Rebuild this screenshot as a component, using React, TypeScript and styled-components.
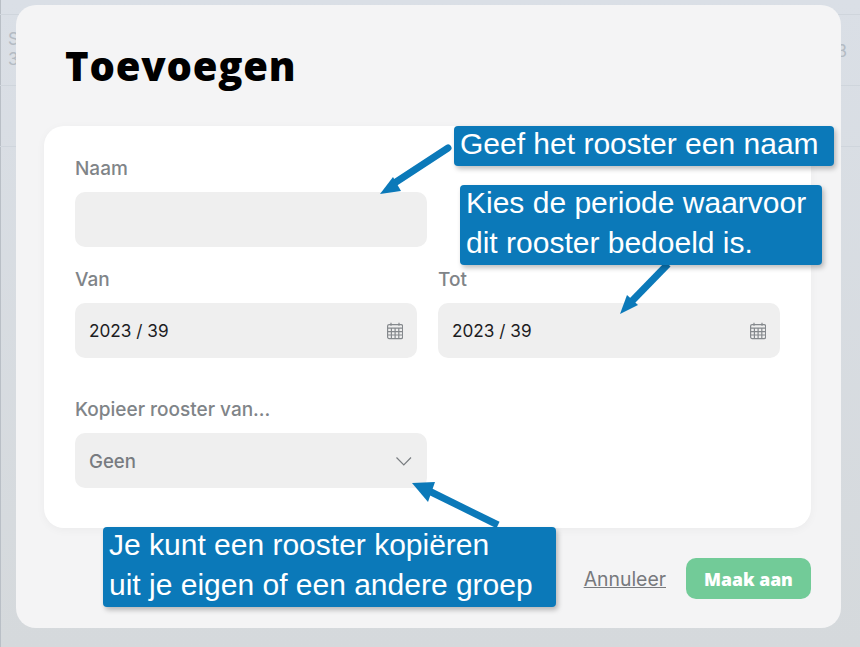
import React from "react"
import styled, { createGlobalStyle } from "styled-components"

const Global = createGlobalStyle`
  html, body {
    margin: 0;
    padding: 0;
    height: 100%;
    overflow: hidden;
    background: #d6dade;
    font-family: "Inter", "Liberation Sans", sans-serif;
  }
  * { box-sizing: border-box; }
`

const Page = styled.div`
  position: relative;
  width: 860px;
  height: 647px;
  background: linear-gradient(#dadfe6, #d5d9dc);
  box-shadow: inset 1px 0 #b9bfc6;
  overflow: hidden;
`

const BackRow = styled.div<{ $h: number }>`
  display: flex;
  justify-content: space-between;
  height: ${(p) => p.$h}px;
  padding: 14px 13px 0 8px;
  border-bottom: 1px solid #cfd5dc;
  color: #b4bbc3;
  font-size: 17px;
  line-height: 20px;
`

const BackCol = styled.div`
  display: flex;
  flex-direction: column;
`

const BackValue = styled.span`
  margin-top: 12px;
`

const Modal = styled.div`
  position: absolute;
  left: 16px;
  top: 5px;
  width: 825px;
  height: 623px;
  padding: 0 30px 0 28px;
  background: #f4f4f5;
  border-radius: 20px;
`

const Title = styled.h1`
  margin: 0;
  height: 121px;
  padding: 37px 0 0 21px;
  color: #000;
  font-family: "Open Sans", "Inter", sans-serif;
  font-size: 40px;
  font-weight: 800;
  line-height: 48px;
  letter-spacing: 0.8px;
`

const Card = styled.div`
  height: 402px;
  padding: 30px 30px 0 31px;
  background: #fff;
  border-radius: 20px;
  box-shadow: 0 2px 10px rgba(0, 0, 0, 0.04);
`

const Field = styled.div<{ $w?: number; $mt?: number }>`
  width: ${(p) => (p.$w ? `${p.$w}px` : "auto")};
  margin-top: ${(p) => p.$mt ?? 0}px;
`

const Label = styled.div`
  height: 24px;
  margin-bottom: 12px;
  padding-top: 1px;
  color: #808488;
  font-size: 19px;
  font-weight: 500;
  line-height: 24px;
`

const Input = styled.div<{ $muted?: boolean }>`
  display: flex;
  align-items: center;
  justify-content: space-between;
  height: 55px;
  padding: ${(p) => (p.$muted ? "1px" : "0")} 14px 0;
  background: #efefef;
  border-radius: 10px;
  color: ${(p) => (p.$muted ? "#777b80" : "#1d1d1f")};
  font-size: ${(p) => (p.$muted ? 18.6 : 17.2)}px;
  font-weight: ${(p) => (p.$muted ? 500 : 400)};
`

const DateRow = styled.div`
  display: grid;
  grid-template-columns: 342px 342px;
  column-gap: 21px;
  margin-top: 20px;
`

const Footer = styled.div`
  display: flex;
  align-items: center;
  justify-content: flex-end;
  gap: 20px;
  margin-top: 30px;
`

const Cancel = styled.a`
  color: #77797d;
  font-size: 19.4px;
  font-weight: 400;
  text-decoration: underline;
`

const Submit = styled.button`
  width: 125px;
  height: 41px;
  padding: 0;
  border: none;
  border-radius: 10px;
  background: #72cb98;
  color: #fff;
  font-family: "Open Sans", sans-serif;
  font-size: 17.6px;
  font-weight: 800;
`

const Arrows = styled.svg`
  position: absolute;
  left: 0;
  top: 0;
  pointer-events: none;
`

const Callout = styled.div<{ $x: number; $y: number; $w: number; $h: number }>`
  position: absolute;
  left: ${(p) => p.$x}px;
  top: ${(p) => p.$y}px;
  width: ${(p) => p.$w}px;
  height: ${(p) => p.$h}px;
  padding: 0 6px;
  background: #0b79b9;
  border-radius: 4px;
  box-shadow: 2px 3px 5px rgba(0, 0, 0, 0.25);
  color: #fff;
  font-family: "Liberation Sans", Arial, sans-serif;
  font-size: 30px;
  line-height: 40px;
  white-space: pre;

  &::before {
    content: "";
    display: block;
    margin-top: -2px;
  }
`

const CalendarIcon = () => (
  <svg width="18" height="18" viewBox="-1 0 18 18" fill="none" stroke="#85898d" strokeWidth="1.2">
    <rect x="1.6" y="2.6" width="15" height="14" rx="1.5" />
    <path d="M5 .8v3M13 .8v3" />
    <path d="M1.6 6.2h15M1.6 9.6h15M1.6 13h15M5.4 6.2v10.4M9.1 6.2v10.4M12.8 6.2v10.4" />
  </svg>
)

const ChevronIcon = () => (
  <svg width="18" height="10" viewBox="0 0 18 10" fill="none" stroke="#797d81" strokeWidth="1.2">
    <path d="M1.5 1.5 8.8 8.8 16 1.5" />
  </svg>
)

function App() {
  return (
    <Page>
      <Global />
      <BackRow $h={14} />
      <BackRow $h={71}>
        <BackCol>
          <span>S</span>
          <span>3</span>
        </BackCol>
        <BackValue>3</BackValue>
      </BackRow>
      <BackRow $h={61} />

      <Modal>
        <Title>Toevoegen</Title>
        <Card>
          <Field $w={352}>
            <Label>Naam</Label>
            <Input />
          </Field>
          <DateRow>
            <Field>
              <Label>Van</Label>
              <Input>
                2023 / 39
                <CalendarIcon />
              </Input>
            </Field>
            <Field>
              <Label>Tot</Label>
              <Input>
                2023 / 39
                <CalendarIcon />
              </Input>
            </Field>
          </DateRow>
          <Field $w={352} $mt={39}>
            <Label>Kopieer rooster van...</Label>
            <Input $muted>
              Geen
              <ChevronIcon />
            </Input>
          </Field>
        </Card>
        <Footer>
          <Cancel>Annuleer</Cancel>
          <Submit>Maak aan</Submit>
        </Footer>
      </Modal>

      <Arrows width="860" height="647" viewBox="0 0 860 647" fill="#0b79b9" stroke="none">
        <path d="M448 148 396 182" stroke="#0b79b9" strokeWidth="7" strokeLinecap="round" />
        <path d="M380 194 393 177 401 191Z" />
        <path d="M668 264 632 301" stroke="#0b79b9" strokeWidth="7" />
        <path d="M620 314 627 295 638 305Z" />
        <path d="M498 525 425 489" stroke="#0b79b9" strokeWidth="7" />
        <path d="M412 483 435 482 428 502Z" />
      </Arrows>

      <Callout $x={454} $y={126} $w={380} $h={40}>Geef het rooster een naam</Callout>
      <Callout $x={460} $y={185} $w={362} $h={80}>{"Kies de periode waarvoor\ndit rooster bedoeld is."}</Callout>
      <Callout $x={103} $y={527} $w={453} $h={80}>{"Je kunt een rooster kopiëren\nuit je eigen of een andere groep"}</Callout>
    </Page>
  )
}

export default App
